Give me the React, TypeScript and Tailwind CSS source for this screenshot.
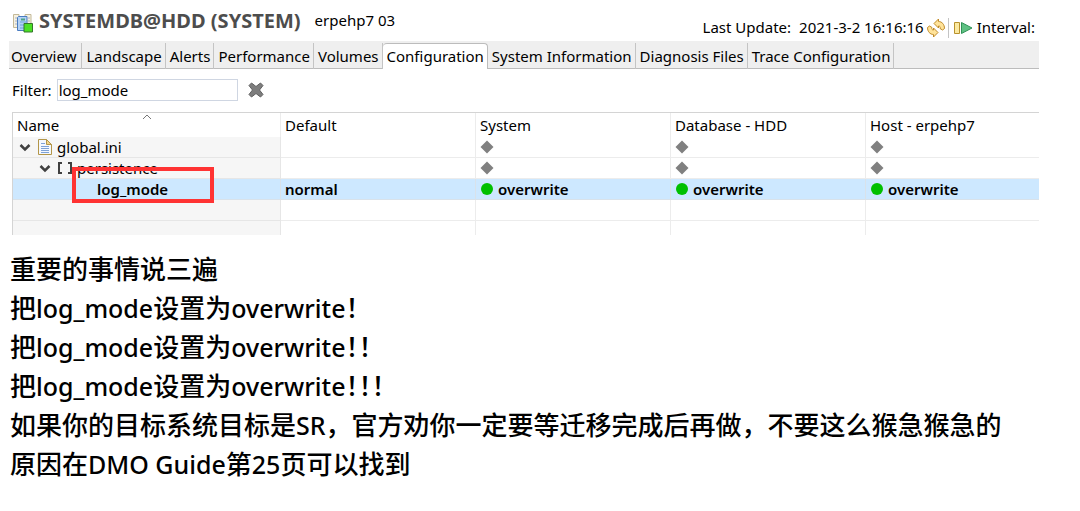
import React from 'react';

const tabs = [
  'Overview',
  'Landscape',
  'Alerts',
  'Performance',
  'Volumes',
  'Configuration',
  'System Information',
  'Diagnosis Files',
  'Trace Configuration',
];

const scopes = ['System', 'Database - HDD', 'Host - erpehp7'];

const SystemIcon: React.FC = () => (
  <svg className="mt-1 h-5 w-5 shrink-0" viewBox="0 0 20 20" fill="none">
    <path d="M.5 1.500H6v13H.5z" fill="#f6f1e2" stroke="#c4b998" />
    <path d="M12 1.500h6v12h-6z" fill="#f6f1e2" stroke="#c4b998" />
    <path d="M2 5h2M2 8h2M2 11h2M15 5h2M15 8h2" stroke="#a9b4c4" />
    <path d="M5.500 3.500H14v14H4.500v-13z" fill="#b4d3f7" stroke="#4a7cc0" />
    <path d="M7 9h6M7 12h4M7 15h4" stroke="#6c9edb" />
    <path d="M8 5.500h4v2H8z" fill="#4fa387" />
    <path d="M11 10.500h8.500V19H11z" fill="#4be026" stroke="#35762b" />
  </svg>
);

const RefreshIcon: React.FC = () => (
  <svg className="h-5 w-5" viewBox="0 0 20 20" fill="#ffe39a" stroke="#c08a28" strokeLinejoin="round">
    <path d="M8 5.500L12.500 1v2.500c3.500 0 6 3 6 7l-2 1.500-2.500-1.500c.5-1.500 0-2.500-1.500-2.500V10z" />
    <path d="M12 14.500L7.500 19v-2.500c-3.500 0-6-3-6-7l2-1.500L6 9.500c-.5 1.500 0 2.500 1.500 2.500v-2z" />
  </svg>
);

const PlayIcon: React.FC = () => (
  <svg className="h-5 w-5" viewBox="0 0 20 20">
    <path d="M1.500 4.500h5v11h-5z" fill="#fbe9a0" stroke="#b8912c" />
    <path d="M8.500 4.500v11L19 10z" fill="#5fc183" stroke="#2f9156" strokeLinejoin="round" />
  </svg>
);

const ClearIcon: React.FC = () => (
  <svg className="h-4 w-4" viewBox="0 0 16 16">
    <path
      d="M3.500 1L8 4.500 12.500 1 15 3.500 11.500 8l3.500 4.500-2.500 2.500L8 11.500 3.500 15 1 12.500 4.500 8 1 3.500z"
      fill="#7d7d7d"
      stroke="#5f5f5f"
      strokeLinejoin="round"
    />
  </svg>
);

const Twisty: React.FC = () => (
  <svg className="h-3 w-3" viewBox="0 0 12 12" fill="none" stroke="#404040" strokeWidth="2.500">
    <path d="M1.500 4L6 8.500 10.500 4" />
  </svg>
);

const FileIcon: React.FC = () => (
  <svg className="h-4 w-4" viewBox="0 0 16 16">
    <path d="M1.500.5h8l5 5v10h-13z" fill="#f4f8fe" stroke="#b39649" />
    <path d="M9.500.5v5h5z" fill="#f1d48a" stroke="#b39649" />
    <path d="M4 4.500h4M4 7.500h8M4 9.500h8M4 11.500h8M4 13.500h8" stroke="#7ea2d6" />
  </svg>
);

const SectionIcon: React.FC = () => (
  <svg className="h-4 w-4" viewBox="0 0 16 16" fill="none" stroke="#404040" strokeWidth="2">
    <path d="M5 3H2v10h3M11 3h3v10h-3" />
  </svg>
);

const Diamond: React.FC = () => (
  <svg className="h-[14px] w-[14px]" viewBox="0 0 14 14">
    <path d="M7 .5L13.500 7 7 13.500.5 7z" fill="#808080" />
  </svg>
);

const Dot: React.FC = () => (
  <svg className="h-[14px] w-[14px]" viewBox="0 0 14 14">
    <circle cx="7" cy="7" r="6" fill="#00c000" />
  </svg>
);

const cell = 'h-[21px] border-r border-b border-[#ececec] p-0 pl-1 last:border-r-0';
const nameCell = 'h-[21px] border-r border-b border-[#e6e6e6] bg-[#f6f6f6] p-0';
const selectedCell = 'h-[21px] border-r border-b border-[#d9e2ea] bg-[#cde8ff] p-0 last:border-r-0';

const ConfigTable: React.FC = () => (
  <table className="mt-2.5 w-full table-fixed border-separate border-spacing-0 border-t border-l border-[#d4d4d4] text-left leading-5">
    <colgroup>
      <col className="w-[268px]" />
      <col className="w-[195px]" />
      <col className="w-[195px]" />
      <col className="w-[195px]" />
      <col />
    </colgroup>
    <thead>
      <tr>
        <th className="relative h-6 border-r border-[#ececec] p-0 pl-1 font-normal">
          Name
          <svg className="absolute inset-x-0 top-0 mx-auto h-2 w-2" viewBox="0 0 8 8" fill="none" stroke="#777">
            <path d="M0 6l4-4 4 4" />
          </svg>
        </th>
        <th className="border-r border-[#ececec] p-0 pl-1 font-normal">Default</th>
        {scopes.map((scope) => (
          <th key={scope} className="border-r border-[#ececec] p-0 pl-1 font-normal last:border-r-0">
            {scope}
          </th>
        ))}
      </tr>
    </thead>
    <tbody>
      <tr>
        <td className={nameCell}>
          <div className="flex items-center pl-1.5">
            <Twisty />
            <span className="ml-1.5"><FileIcon /></span>
            <span className="ml-1">global.ini</span>
          </div>
        </td>
        <td className={cell} />
        {scopes.map((scope) => (
          <td key={scope} className={cell}><Diamond /></td>
        ))}
      </tr>
      <tr>
        <td className={nameCell}>
          <div className="flex items-center pl-[26px]">
            <Twisty />
            <span className="ml-1.5"><SectionIcon /></span>
            <span className="ml-1">persistence</span>
          </div>
        </td>
        <td className={cell} />
        {scopes.map((scope) => (
          <td key={scope} className={cell}><Diamond /></td>
        ))}
      </tr>
      <tr className="font-semibold">
        <td className={`relative ${selectedCell}`}>
          <span className="pl-[84px]">log_mode</span>
          <span className="absolute -top-3 left-[59px] h-9 w-[142px] border-4 border-[#ff3333]" />
        </td>
        <td className={selectedCell}>
          <span className="pl-1">normal</span>
        </td>
        {scopes.map((scope) => (
          <td key={scope} className={selectedCell}>
            <div className="flex items-center gap-1 pl-1">
              <Dot />
              overwrite
            </div>
          </td>
        ))}
      </tr>
      <tr>
        <td className={nameCell} />
        <td className={cell} />
        {scopes.map((scope) => (
          <td key={scope} className={cell} />
        ))}
      </tr>
      <tr>
        <td className="h-[14px] border-r border-[#e6e6e6] bg-[#f6f6f6] p-0" />
        <td className="border-r border-[#ececec] p-0" />
        {scopes.map((scope) => (
          <td key={scope} className="border-r border-[#ececec] p-0 last:border-r-0" />
        ))}
      </tr>
    </tbody>
  </table>
);

const Latin: React.FC<{ children: string }> = ({ children }) => <span className="text-[25px]">{children}</span>;

// half-width setting of the full-width exclamation mark
const Bang: React.FC<{ count: number }> = ({ count }) => (
  <span className="[font-feature-settings:'halt']">{'\uff01'.repeat(count)}</span>
);

const Notes: React.FC = () => (
  <section className="mt-[15px] pl-[10px] font-['Noto_Sans','Noto_Sans_CJK_SC',sans-serif] text-[26px] leading-[39px] font-medium">
    <p>重要的事情说三遍</p>
    {[1, 2, 3].map((count) => (
      <p key={count}>
        把<Latin>log_mode</Latin>设置为<Latin>overwrite</Latin>
        <Bang count={count} />
      </p>
    ))}
    <p>如果你的目标系统目标是<Latin>SR</Latin>，官方劝你一定要等迁移完成后再做，不要这么猴急猴急的</p>
    <p>原因在<Latin>DMO Guide</Latin>第<Latin>25</Latin>页可以找到</p>
  </section>
);

const App: React.FC = () => {
  return (
    <main className="min-h-screen bg-white text-black">
      <div className="mr-[41px] ml-[9px] font-['Noto_Sans',sans-serif] text-[15px]">
        <header className="flex h-[41px] items-center justify-between pl-1">
          <div className="flex items-center">
            <SystemIcon />
            <h1 className="ml-1.5 text-xl font-bold text-[#4d4d4d]">SYSTEMDB@HDD (SYSTEM)</h1>
            <span className="ml-3.5">erpehp7 03</span>
          </div>
          <div className="flex items-center pt-3.5 pr-1">
            <span>Last Update:</span>
            <span className="ml-2">2021-3-2 16:16:16</span>
            <button type="button" aria-label="Refresh" className="ml-0.5">
              <RefreshIcon />
            </button>
            <span className="mr-1 ml-0.5 h-5 w-px bg-[#c4c4c4]" />
            <button type="button" aria-label="Start automatic refresh">
              <PlayIcon />
            </button>
            <span className="ml-1">Interval:</span>
          </div>
        </header>

        <nav className="flex h-7 bg-[#efefef] pt-0.5 shadow-[inset_0_-1px_0_#bcbcbc]">
          {tabs.map((tab) => (
            <button
              key={tab}
              type="button"
              className={
                tab === 'Configuration'
                  ? 'rounded-t border-t border-r border-[#bcbcbc] bg-white pr-[3px] pl-1 whitespace-nowrap'
                  : 'border-r border-[#c4c4c4] pr-[3px] pl-1 whitespace-nowrap first:pr-[5px] first:pl-0.5'
              }
            >
              {tab}
            </button>
          ))}
        </nav>

        <div className="pl-[3px]">
          <div className="mt-2.5 flex items-center">
            <label htmlFor="filter">Filter:</label>
            <input
              id="filter"
              type="text"
              defaultValue="log_mode"
              className="ml-[5px] h-[22px] w-[181px] border border-[#cfd6e2] px-px outline-none"
            />
            <button type="button" aria-label="Clear filter" className="ml-2.5">
              <ClearIcon />
            </button>
          </div>
          <ConfigTable />
        </div>
      </div>
      <Notes />
    </main>
  );
};

export default App;
